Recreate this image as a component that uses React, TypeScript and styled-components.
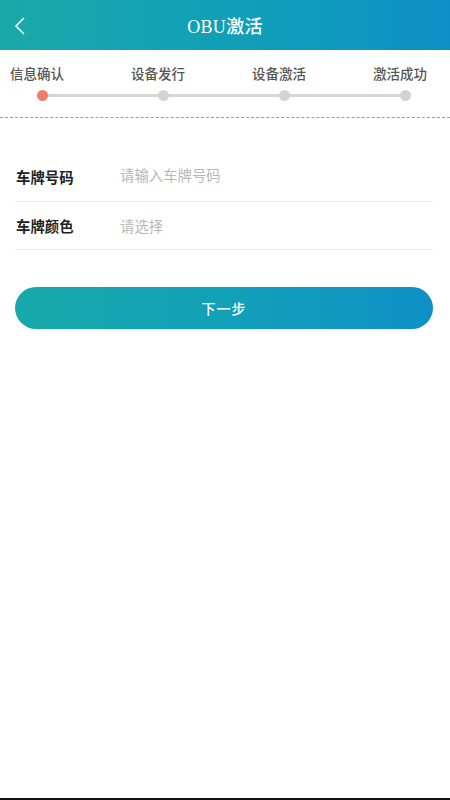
import styled, { createGlobalStyle } from 'styled-components';

const steps = ['信息确认', '设备发行', '设备激活', '激活成功'];

const GlobalStyle = createGlobalStyle`
  html, body {
    margin: 0;
    padding: 0;
    background: #fff;
  }
  body {
    font-family: "Liberation Serif", "Noto Sans CJK SC", serif;
  }
`;

export default function App() {
    const current = 0;
    return (
        <Page>
            <GlobalStyle />
            <Header>
                <BackButton>
                    <svg width="14" height="20" viewBox="0 0 14 20">
                        <path d="M11 2 L3 10 L11 18" fill="none" stroke="#fff" strokeWidth="1.6" />
                    </svg>
                </BackButton>
                <Title>OBU激活</Title>
            </Header>

            <Steps>
                <StepLabels>
                    {steps.map((s) => (
                        <StepLabel key={s}>{s}</StepLabel>
                    ))}
                </StepLabels>
                <Track>
                    {steps.map((s, i) => (
                        <Dot key={s} active={i === current} />
                    ))}
                </Track>
            </Steps>
            <Dashed />

            <Form>
                <Row>
                    <Label>车牌号码</Label>
                    <Input placeholder="请输入车牌号码" />
                </Row>
                <Row>
                    <Label>车牌颜色</Label>
                    <Placeholder>请选择</Placeholder>
                </Row>
            </Form>

            <NextButton>下一步</NextButton>
            <BottomBar />
        </Page>
    );
}

const Page = styled.div`
  width: 450px;
  height: 800px;
  display: flex;
  flex-direction: column;
  background: #fff;
`;

const Header = styled.div`
  position: relative;
  height: 50px;
  display: flex;
  align-items: center;
  justify-content: center;
  background: linear-gradient(90deg, #1aa9a9 0%, #0f9dbb 60%, #0d90c6 100%);
`;

const BackButton = styled.div`
  position: absolute;
  left: 13px;
  top: 16px;
  width: 14px;
  height: 20px;
`;

const Title = styled.div`
  color: #fff;
  font-size: 18px;
  font-weight: 500;
  letter-spacing: 0.3px;
`;

const Steps = styled.div`
  display: flex;
  flex-direction: column;
  padding-top: 15px;
`;

const StepLabels = styled.div`
  display: flex;
  justify-content: space-between;
  padding: 0 23px 0 10px;
`;

const StepLabel = styled.span`
  font-size: 13.5px;
  line-height: 20px;
  color: #555;
  font-weight: 500;
`;

const Track = styled.div`
  position: relative;
  display: flex;
  justify-content: space-between;
  margin: 5px 39px 0 37px;
  height: 11px;
  &::before {
    content: '';
    position: absolute;
    left: 5px;
    right: 5px;
    top: 4px;
    height: 3px;
    background: #d6d6d6;
  }
`;

const Dot = styled.span<{ active: boolean }>`
  position: relative;
  width: 11px;
  height: 11px;
  border-radius: 50%;
  background: ${(p) => (p.active ? '#ef7d6e' : '#d3d3d3')};
`;

const Dashed = styled.div`
  margin-top: 16px;
  height: 0;
  border-top: 1.5px dashed #9a9a9a;
`;

const Form = styled.div`
  display: flex;
  flex-direction: column;
  margin: 35px 17px 0 15px;
`;

const Row = styled.div`
  height: 48.5px;
  box-sizing: border-box;
  display: flex;
  align-items: center;
  border-bottom: 1px solid #ececec;
`;

const Label = styled.span`
  width: 104px;
  padding-left: 1px;
  font-size: 14.4px;
  font-weight: 600;
  color: #222;
`;

const Input = styled.input`
  flex: 1;
  border: none;
  outline: none;
  background: transparent;
  padding: 0;
  font-family: inherit;
  font-size: 14.4px;
  color: #333;
  &::placeholder {
    color: #b7b7b7;
  }
`;

const Placeholder = styled.span`
  font-size: 14.4px;
  color: #b7b7b7;
`;

const NextButton = styled.button`
  margin: 37px 17px 0 15px;
  height: 42px;
  border: none;
  border-radius: 21px;
  background: linear-gradient(90deg, #17a9a9 0%, #129fba 55%, #0e90c6 100%);
  color: #fff;
  font-family: inherit;
  font-size: 14px;
  font-weight: 500;
  letter-spacing: 1px;
`;

const BottomBar = styled.div`
  margin-top: auto;
  height: 2px;
  background: #111;
`;
